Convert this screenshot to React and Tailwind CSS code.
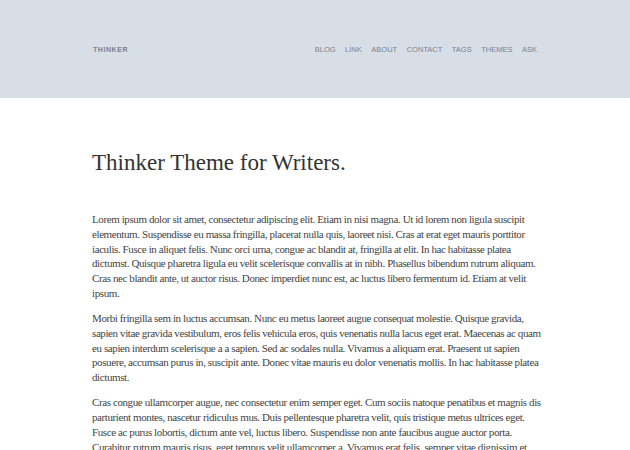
import React from 'react';

const navItems = ['Blog', 'Link', 'About', 'Contact', 'Tags', 'Themes', 'Ask'];

const paragraphs = [
  'Lorem ipsum dolor sit amet, consectetur adipiscing elit. Etiam in nisi magna. Ut id lorem non ligula suscipit elementum. Suspendisse eu massa fringilla, placerat nulla quis, laoreet nisi. Cras at erat eget mauris porttitor iaculis. Fusce in aliquet felis. Nunc orci urna, congue ac blandit at, fringilla at elit. In hac habitasse platea dictumst. Quisque pharetra ligula eu velit scelerisque convallis at in nibh. Phasellus bibendum rutrum aliquam. Cras nec blandit ante, ut auctor risus. Donec imperdiet nunc est, ac luctus libero fermentum id. Etiam at velit ipsum.',
  'Morbi fringilla sem in luctus accumsan. Nunc eu metus laoreet augue consequat molestie. Quisque gravida, sapien vitae gravida vestibulum, eros felis vehicula eros, quis venenatis nulla lacus eget erat. Maecenas ac quam eu sapien interdum scelerisque a a sapien. Sed ac sodales nulla. Vivamus a aliquam erat. Praesent ut sapien posuere, accumsan purus in, suscipit ante. Donec vitae mauris eu dolor venenatis mollis. In hac habitasse platea dictumst.',
  'Cras congue ullamcorper augue, nec consectetur enim semper eget. Cum sociis natoque penatibus et magnis dis parturient montes, nascetur ridiculus mus. Duis pellentesque pharetra velit, quis tristique metus ultrices eget. Fusce ac purus lobortis, dictum ante vel, luctus libero. Suspendisse non ante faucibus augue auctor porta. Curabitur rutrum mauris risus, eget tempus velit ullamcorper a. Vivamus erat felis, semper vitae dignissim et, aliquet quis nisl. Nullam euismod lorem eu nunc sodales, sed blandit lectus tincidunt.',
];

export default function App() {
  return (
    <div className="h-screen overflow-hidden bg-white">
      {/* Header */}
      <header className="h-[98px] bg-[#d8dee6]">
        <div className="ml-[93px] mr-[93px] flex h-full items-center justify-between pt-[2px] font-['Liberation_Sans',sans-serif]">
          <span className="text-[7px] font-bold tracking-[0.08em] text-[#7b818b]">THINKER</span>
          <nav className="flex gap-[9.5px] text-[7.5px] uppercase text-[#7b8290]">
            {navItems.map((item) => (
              <a key={item} href="#" className="hover:text-gray-700">
                {item}
              </a>
            ))}
          </nav>
        </div>
      </header>

      {/* Post */}
      <main className="ml-[92px] w-[450px] pt-[50px] font-['Liberation_Serif',serif]">
        <h1 className="text-[23px] leading-[30px] text-[#333]">Thinker Theme for Writers.</h1>
        <div className="mt-[34px] text-[11px] leading-[14.8px] tracking-[-0.4px] text-[#444]">
          {paragraphs.map((p, i) => (
            <p key={i} className="mb-[10.2px]">
              {p}
            </p>
          ))}
        </div>
      </main>
    </div>
  );
}
